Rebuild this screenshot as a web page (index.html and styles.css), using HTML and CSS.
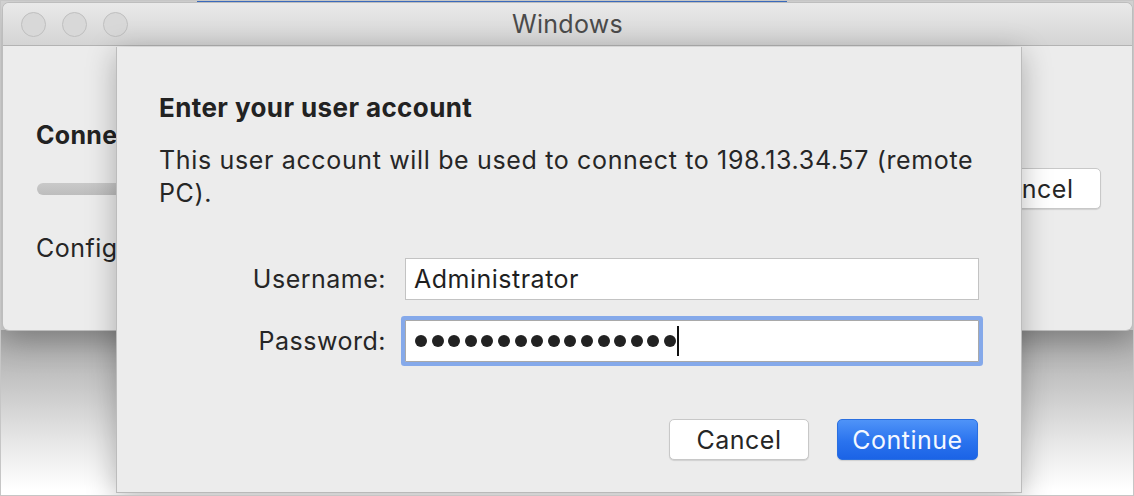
FILE: index.html
```html
<!DOCTYPE html>
<html lang="en">
<head>
<meta charset="utf-8">
<title>Enter your user account</title>
<link rel="stylesheet" href="styles.css">
</head>
<body>
<div class="screen">
  <div class="desk-strip"></div>
  <div class="window">
    <div class="titlebar">
      <div class="lights">
        <span class="light"></span>
        <span class="light"></span>
        <span class="light"></span>
      </div>
      <div class="win-title">Windows</div>
    </div>
    <div class="win-body">
      <div class="conn-clip"><div class="conn-title">Connecting</div></div>
      <div class="progress-row">
        <div class="progress"></div>
        <button class="btn btn-plain bg-cancel">Cancel</button>
      </div>
      <div class="conn-status">Configuring remote PC…</div>
    </div>

    <div class="sheet">
      <h1 class="sheet-title">Enter your user account</h1>
      <p class="sheet-text">This user account will be used to connect to 198.13.34.57 (remote PC).</p>
      <div class="form">
        <label class="lbl">Username:</label>
        <div class="field">Administrator</div>
        <label class="lbl">Password:</label>
        <div class="field focused">
          <span class="dots">
            <i></i><i></i><i></i><i></i><i></i><i></i><i></i><i></i>
            <i></i><i></i><i></i><i></i><i></i><i></i><i></i><i></i>
          </span>
          <span class="caret"></span>
        </div>
      </div>
      <div class="actions">
        <button class="btn btn-plain">Cancel</button>
        <button class="btn btn-primary">Continue</button>
      </div>
    </div>
  </div>
</div>
</body>
</html>
```

FILE: styles.css
```css
* { box-sizing: border-box; }
html, body { margin: 0; padding: 0; }
body {
  width: 1134px;
  height: 496px;
  overflow: hidden;
  font-family: Inter, "Liberation Sans", sans-serif;
  color: #262626;
}
.screen {
  position: relative;
  width: 1134px;
  height: 496px;
  border: 1px solid #c6c6c6;
  overflow: hidden;
  background:
    linear-gradient(180deg, #a9a9a9 0px, #c4c4c4 50px, #e6e6e6 110px, #ffffff 160px) 0 329px / 100% 170px no-repeat,
    #d6d6d6;
}
.desk-strip {
  position: absolute;
  left: 196px;
  top: 0;
  width: 590px;
  height: 2px;
  background: #3d6fc4;
}
.window {
  position: absolute;
  left: 2px;
  top: 2px;
  width: 1129px;
  height: 327px;
  border-radius: 6px;
  background: #ececec;
  box-shadow: 0 0 0 1px #bdbdbd, 0 12px 30px rgba(0,0,0,0.25);
}
.titlebar {
  position: relative;
  height: 43px;
  border-radius: 6px 6px 0 0;
  background: linear-gradient(180deg, #e9e9e9 0%, #d4d4d4 100%);
  border-bottom: 1px solid #b3b3b3;
  display: flex;
  align-items: center;
  justify-content: center;
}
.lights {
  position: absolute;
  left: 18px;
  top: 9px;
  display: flex;
  gap: 16px;
}
.light {
  width: 25px;
  height: 25px;
  border-radius: 50%;
  background: #d8d8d8;
  border: 1px solid #bfbfbf;
}
.win-title {
  font-size: 25px;
  color: #4b4b4b;
  letter-spacing: 0.3px;
}
.win-body {
  padding: 82px 31px 0 33px;
  display: flex;
  flex-direction: column;
}
.conn-clip {
  width: 110px;
  height: 14px;
  overflow: visible;
  clip-path: inset(-10px 0 -10px 0);
}
.conn-title {
  font-size: 25px;
  font-weight: 700;
  line-height: 14px;
  letter-spacing: 0.3px;
  color: #222;
  white-space: nowrap;
}
.progress-row {
  margin-top: 26px;
  display: flex;
  align-items: center;
  gap: 30px;
}
.progress {
  flex: 1;
  height: 12px;
  border-radius: 6px;
  background: linear-gradient(180deg, #c9c9c9, #bdbdbd);
  margin-left: 1px;
}
.bg-cancel { width: 130px; }
.conn-status {
  margin-top: 25px;
  font-size: 25px;
  line-height: 28px;
  letter-spacing: 0.5px;
  color: #262626;
  white-space: nowrap;
}

.sheet {
  position: absolute;
  left: 113px;
  top: 44px;
  width: 906px;
  height: 446px;
  background: #ececec;
  border-left: 1px solid #bcbcbc;
  border-right: 1px solid #bcbcbc;
  border-bottom: 1px solid #b9b9b9;
  box-shadow: 0 6px 28px rgba(0,0,0,0.28);
  padding: 46px 42px 0 42px;
}
.sheet-title {
  margin: 0;
  font-size: 26px;
  line-height: 30px;
  font-weight: 700;
  letter-spacing: 0.4px;
  color: #222;
}
.sheet-text {
  margin: 21px 0 0 0;
  font-size: 25px;
  line-height: 33px;
  letter-spacing: 0.65px;
  width: 822px;
  color: #262626;
}
.form {
  margin-top: 48px;
  display: grid;
  grid-template-columns: 227px 574px;
  column-gap: 19px;
  row-gap: 20px;
  align-items: center;
}
.lbl {
  text-align: right;
  font-size: 25px;
  letter-spacing: 0.5px;
  color: #262626;
}
.field {
  height: 42px;
  background: #fff;
  border: 1px solid #c3c3c3;
  display: flex;
  align-items: center;
  padding-left: 8px;
  font-size: 25px;
  letter-spacing: 0.5px;
  color: #1f1f1f;
}
.field.focused {
  border: 1px solid #a9a9a9;
  border-radius: 1px;
  box-shadow: 0 0 0 4px #85a9ea;
  padding-left: 9px;
}
.dots {
  display: flex;
  gap: 4.6px;
}
.dots i {
  width: 12px;
  height: 12px;
  border-radius: 50%;
  background: #222;
}
.caret {
  width: 2px;
  height: 30px;
  background: #111;
  margin-left: 1px;
}
.actions {
  margin-top: 57px;
  margin-right: 1px;
  display: flex;
  justify-content: flex-end;
  gap: 28px;
}
.btn {
  height: 41px;
  border-radius: 5px;
  font-family: inherit;
  font-size: 25px;
  letter-spacing: 0.5px;
  padding: 0;
  cursor: default;
}
.btn-plain {
  width: 140px;
  background: #fff;
  color: #262626;
  border: 1px solid #c8c8c8;
  box-shadow: 0 1px 1px rgba(0,0,0,0.12);
}
.btn-primary {
  width: 141px;
  color: #f4f8ff;
  border: 1px solid #2a6fe0;
  background: linear-gradient(180deg, #4f93f8 0%, #2a73ee 55%, #1b63e6 100%);
  box-shadow: 0 1px 1px rgba(0,0,0,0.12);
}
```
